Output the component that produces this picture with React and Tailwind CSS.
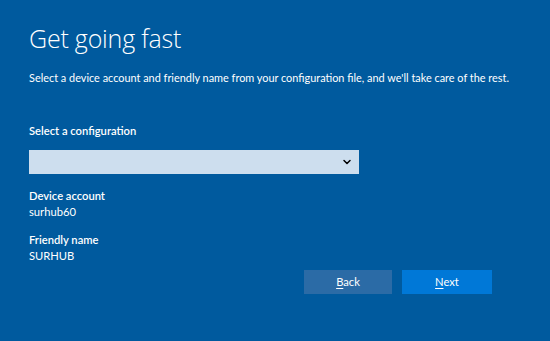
import { ChevronDown } from 'lucide-react'

export default function App() {
  return (
    <div
      className="w-[550px] h-[341px] bg-[#005a9e] text-white overflow-hidden"
      style={{ fontFamily: 'Lato, "Open Sans", sans-serif' }}
    >
      <div className="pl-[29px] pt-[21px] flex flex-col">
        <h1
          className="text-[25px] font-light leading-[34px] tracking-[-0.2px]"
          style={{ fontFamily: '"Open Sans", sans-serif' }}
        >
          Get going fast
        </h1>
        <p className="mt-[15px] text-[10.9px] leading-[16px] whitespace-nowrap">
          Select a device account and friendly name from your configuration file, and we'll take care of the rest.
        </p>

        <p className="mt-[37px] text-[11.2px] font-semibold leading-[16px]">Select a configuration</p>
        <div className="mt-[11px] w-[330px] h-[24px] bg-[#cddeee] flex items-center justify-end pr-[6px]">
          <ChevronDown size={12} strokeWidth={3} className="text-black" />
        </div>

        <p className="mt-[14px] text-[11.2px] font-semibold leading-[16px]">Device account</p>
        <p className="text-[11.2px] leading-[15px]">surhub60</p>

        <p className="mt-[13px] text-[11.2px] font-semibold leading-[16px]">Friendly name</p>
        <p className="text-[11.2px] leading-[15px]">SURHUB</p>
      </div>

      <div className="flex gap-[10px] pl-[304px] mt-[7px]">
        <button className="w-[88px] h-[24px] bg-[#2b6ba6] text-[11.2px] text-white">
          <span className="underline underline-offset-2">B</span>ack
        </button>
        <button className="w-[90px] h-[24px] bg-[#0078d7] text-[11.2px] text-white">
          <span className="underline underline-offset-2">N</span>ext
        </button>
      </div>
    </div>
  )
}
